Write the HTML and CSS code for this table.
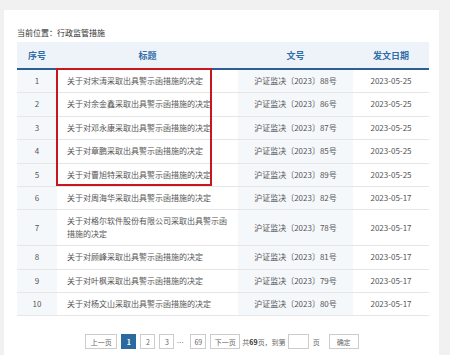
FILE: index.html
```html
<!DOCTYPE html>
<html lang="zh-CN">
<head>
<meta charset="utf-8">
<link rel="stylesheet" href="styles.css">
</head>
<body>
<div class="card">
  <div class="crumb">当前位置：行政监管措施</div>
  <div class="table-wrap">
    <table class="list">
      <colgroup>
        <col class="c-no"><col class="c-title"><col class="c-doc"><col class="c-date">
      </colgroup>
      <thead>
        <tr><th>序号</th><th>标题</th><th>文号</th><th>发文日期</th></tr>
      </thead>
      <tbody>
        <tr><td class="no">1</td><td class="title">关于对宋涛采取出具警示函措施的决定</td><td class="doc">沪证监决〔2023〕88号</td><td class="date">2023-05-25</td></tr>
        <tr><td class="no">2</td><td class="title">关于对余金鑫采取出具警示函措施的决定</td><td class="doc">沪证监决〔2023〕86号</td><td class="date">2023-05-25</td></tr>
        <tr><td class="no">3</td><td class="title">关于对邓永康采取出具警示函措施的决定</td><td class="doc">沪证监决〔2023〕87号</td><td class="date">2023-05-25</td></tr>
        <tr><td class="no">4</td><td class="title">关于对章鹏采取出具警示函措施的决定</td><td class="doc">沪证监决〔2023〕85号</td><td class="date">2023-05-25</td></tr>
        <tr><td class="no">5</td><td class="title">关于对曹旭特采取出具警示函措施的决定</td><td class="doc">沪证监决〔2023〕89号</td><td class="date">2023-05-25</td></tr>
        <tr><td class="no">6</td><td class="title">关于对周海华采取出具警示函措施的决定</td><td class="doc">沪证监决〔2023〕82号</td><td class="date">2023-05-17</td></tr>
        <tr><td class="no">7</td><td class="title">关于对格尔软件股份有限公司采取出具警示函措施的决定</td><td class="doc">沪证监决〔2023〕78号</td><td class="date">2023-05-17</td></tr>
        <tr><td class="no">8</td><td class="title">关于对顾峰采取出具警示函措施的决定</td><td class="doc">沪证监决〔2023〕81号</td><td class="date">2023-05-17</td></tr>
        <tr><td class="no">9</td><td class="title">关于对叶枫采取出具警示函措施的决定</td><td class="doc">沪证监决〔2023〕79号</td><td class="date">2023-05-17</td></tr>
        <tr><td class="no">10</td><td class="title">关于对杨文山采取出具警示函措施的决定</td><td class="doc">沪证监决〔2023〕80号</td><td class="date">2023-05-17</td></tr>
      </tbody>
    </table>
    <div class="highlight"></div>
  </div>
  <div class="pager">
    <span class="btn prev">上一页</span>
    <span class="btn num active">1</span>
    <span class="btn num">2</span>
    <span class="btn num">3</span>
    <span class="dots">…</span>
    <span class="btn num wide">69</span>
    <span class="btn next">下一页</span>
    <span class="total">共<b>69</b>页，到第</span>
    <span class="input"></span>
    <span class="unit">页</span>
    <span class="btn ok">确定</span>
  </div>
</div>
</body>
</html>
```

FILE: styles.css
```css
* { box-sizing: border-box; }
html, body { margin: 0; padding: 0; }
body {
  background: #f1f1f1;
  font-family: "Noto Sans CJK SC", "Noto Sans", sans-serif;
  width: 450px;
  height: 355px;
  overflow: hidden;
}
.card {
  background: #fff;
  margin: 10px 11px 0 4px;
  height: 360px;
  padding: 17px 10px 0 13px;
}
.crumb {
  font-size: 8px;
  line-height: 12px;
  color: #333;
  margin-bottom: 3px;
}
.table-wrap {
  position: relative;
}
.list {
  width: 412px;
  border-collapse: collapse;
  table-layout: fixed;
}
.c-no { width: 40px; }
.c-title { width: 181px; }
.c-doc { width: 115px; }
.c-date { width: 76px; }
.list th {
  height: 27px;
  background: #eef3f9;
  color: #2f6ea8;
  font-size: 9px;
  font-weight: bold;
  text-align: center;
  border-bottom: 2px solid #2c5f91;
  padding: 0;
}
.list td {
  font-size: 8px;
  line-height: 12.4px;
  color: #555;
  padding: 5px 0;
  border-bottom: 1px solid #e6e6e6;
  text-align: center;
  vertical-align: middle;
}
.list td.no, .list td.doc { background: #f5f8fb; }
.list td.title {
  text-align: left;
  padding-left: 10px;
  padding-right: 10px;
}
.highlight {
  position: absolute;
  left: 39px;
  top: 26px;
  width: 156px;
  height: 118px;
  border: 2px solid #c8161d;
}
.pager {
  display: flex;
  align-items: center;
  justify-content: center;
  margin-top: 18px;
  font-size: 7px;
  color: #666;
  padding-right: 2px;
}
.btn {
  height: 15px;
  border: 1px solid #ccc;
  display: flex;
  align-items: center;
  justify-content: center;
  background: #fff;
  margin-right: 4px;
}
.prev { width: 32px; }
.next { width: 30px; margin-right: 2px; }
.num { width: 15px; }
.num.wide { width: 16px; }
.active {
  background: #2b6a9f;
  border-color: #2b6a9f;
  color: #fff;
  font-weight: bold;
}
.dots { width: 12px; text-align: center; margin-right: 4px; margin-left: -4px; }
.total b { color: #333; }
.total { margin-right: 2px; }
.input {
  width: 21px;
  height: 15px;
  border: 1px solid #ccc;
  margin-right: 4px;
}
.unit { margin-right: 9px; }
.ok { width: 30px; margin-right: 0; }
```
